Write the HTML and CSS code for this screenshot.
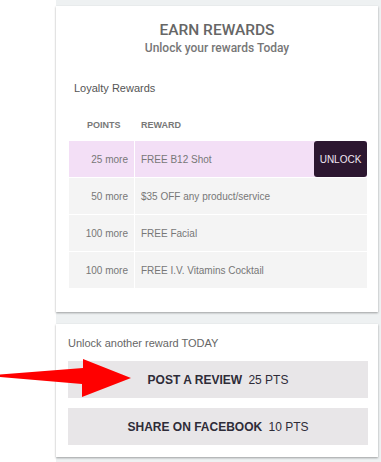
FILE: index.html
```html
<!DOCTYPE html>
<html>
<head>
<meta charset="utf-8">
<link rel="stylesheet" href="styles.css">
</head>
<body>
<div class="page">
  <section class="card rewards">
    <h1 class="title">EARN REWARDS</h1>
    <p class="subtitle">Unlock your rewards Today</p>
    <h2 class="section-label">Loyalty Rewards</h2>
    <div class="table">
      <div class="thead">
        <div class="th th-points">POINTS</div>
        <div class="th th-reward">REWARD</div>
      </div>
      <div class="tbody">
        <div class="row row-active">
          <div class="cell points">25 more</div>
          <div class="cell reward">
            <span>FREE B12 Shot</span>
            <button class="unlock">UNLOCK</button>
          </div>
        </div>
        <div class="row">
          <div class="cell points">50 more</div>
          <div class="cell reward"><span>$35 OFF any product/service</span></div>
        </div>
        <div class="row">
          <div class="cell points">100 more</div>
          <div class="cell reward"><span>FREE Facial</span></div>
        </div>
        <div class="row">
          <div class="cell points">100 more</div>
          <div class="cell reward"><span>FREE I.V. Vitamins Cocktail</span></div>
        </div>
      </div>
    </div>
  </section>
  <section class="card actions">
    <p class="actions-label">Unlock another reward TODAY</p>
    <button class="action"><strong>POST A REVIEW</strong> 25 PTS</button>
    <button class="action"><strong>SHARE ON FACEBOOK</strong> 10 PTS</button>
  </section>
</div>
<svg class="arrow" width="140" height="50" viewBox="0 355 140 50">
  <polygon points="0,374.5 83,368 83,359 131,378 82,397 82,384 0,377" fill="#ff0000"/>
</svg>
</body>
</html>
```
FILE: styles.css
```css
html, body {
  margin: 0;
  padding: 0;
  background: #ffffff;
  font-family: "Liberation Sans", Arial, sans-serif;
}

.page {
  margin-left: 56px;
  background: #eef1f2;
  padding: 6px 3px 10px 0;
  min-height: 446px;
}

.card {
  background: #ffffff;
  box-shadow: 0 1px 2px rgba(0, 0, 0, 0.35);
}

.rewards {
  padding: 15px 0 24px;
}

.title {
  margin: 0;
  text-align: center;
  font-family: Roboto, "Liberation Sans", sans-serif;
  font-size: 15.5px;
  line-height: 18px;
  font-weight: 500;
  color: #666666;
}

.subtitle {
  margin: 2px 0 0;
  text-align: center;
  font-family: Roboto, "Liberation Sans", sans-serif;
  font-size: 12px;
  line-height: 14px;
  font-weight: 500;
  color: #777777;
}

.section-label {
  margin: 27px 0 0;
  padding-left: 18px;
  font-size: 11px;
  line-height: 13px;
  font-weight: normal;
  color: #555555;
}

.table {
  margin: 15px 11px 0 13px;
}

.thead {
  display: grid;
  grid-template-columns: 65px 1fr;
  column-gap: 1px;
  padding: 10px 0;
}

.th {
  font-size: 9px;
  line-height: 11px;
  font-weight: bold;
  color: #777777;
}

.th-points {
  padding-left: 18px;
}

.th-reward {
  padding-left: 6px;
}

.tbody {
  display: flex;
  flex-direction: column;
  gap: 1px;
}

.row {
  display: grid;
  grid-template-columns: 65px 1fr;
  column-gap: 1px;
  height: 36px;
}

.cell {
  display: flex;
  align-items: center;
  background: #f4f4f4;
  font-size: 10px;
  color: #777777;
}

.row-active .cell {
  background: #f3dff6;
}

.points {
  justify-content: flex-end;
  padding-right: 6px;
}

.reward {
  justify-content: space-between;
  padding-left: 6px;
}

.unlock {
  align-self: stretch;
  width: 53px;
  border: 0;
  border-radius: 3px;
  background: #2c1730;
  color: #efe6f0;
  font-family: "Liberation Sans", Arial, sans-serif;
  font-size: 10px;
  padding: 0;
}

.actions {
  margin-top: 12px;
  padding: 13px 10px 12px 12px;
  display: flex;
  flex-direction: column;
  gap: 10px;
}

.actions-label {
  margin: 0 0 1px;
  font-size: 11px;
  line-height: 13px;
  color: #666666;
}

.action {
  height: 37px;
  border: 0;
  background: #e8e6e8;
  font-family: "Liberation Sans", Arial, sans-serif;
  font-size: 12px;
  color: #2e2c38;
  padding: 0;
  text-align: center;
}

.action strong {
  margin-right: 3px;
}

.arrow {
  position: absolute;
  left: 0;
  top: 355px;
}
```
